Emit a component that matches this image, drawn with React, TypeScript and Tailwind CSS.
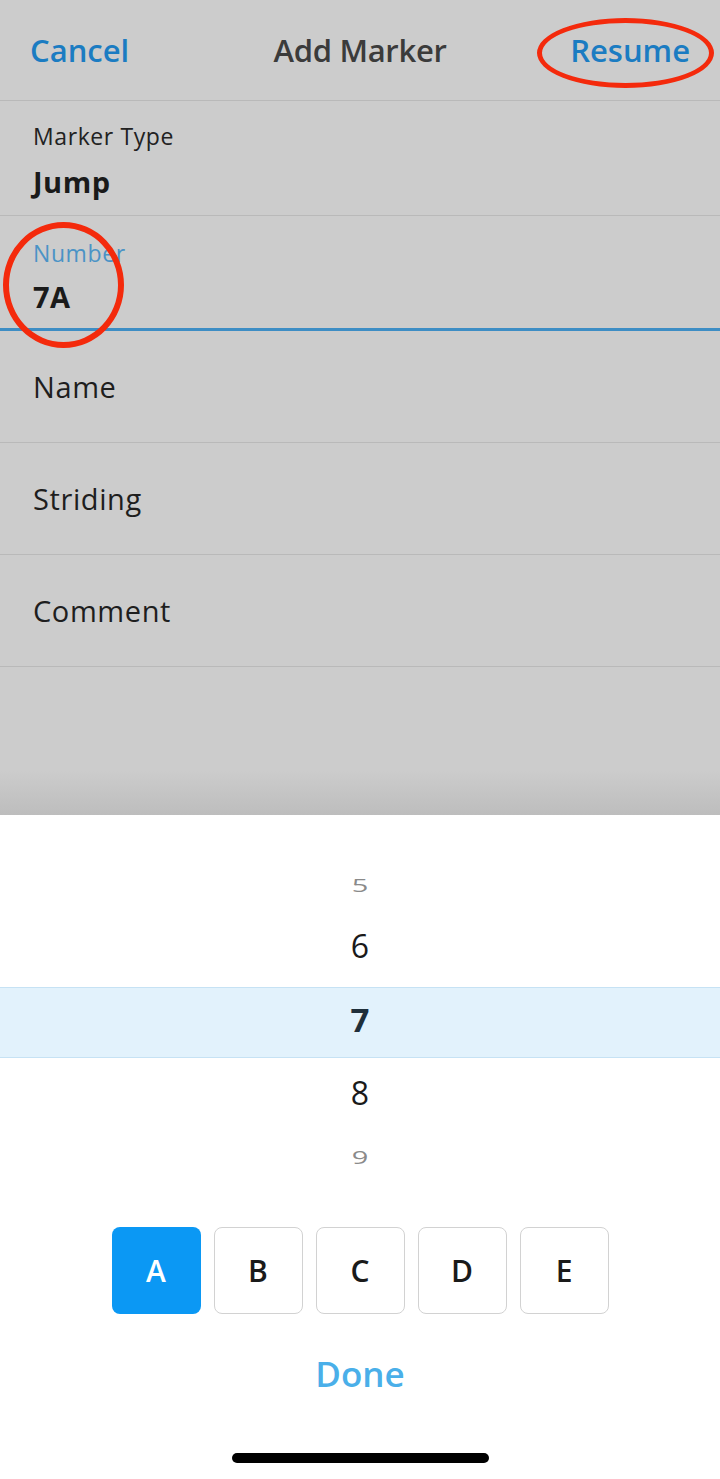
import React, { useState } from 'react';

const FONT = { fontFamily: '"Open Sans", Lato, sans-serif' };

const LETTERS = ['A', 'B', 'C', 'D', 'E'];

function Field({ label, value, active }: { label?: string; value: string; active?: boolean }) {
  if (!label) {
    return (
      <div className="h-[112px] flex items-center px-[33px] border-b border-[#b9b9b9]">
        <span className="text-[29px] tracking-[0.6px] text-[#1e1e1e]">{value}</span>
      </div>
    );
  }
  return (
    <div
      className={`h-[115px] flex flex-col px-[33px] ${
        active ? 'pt-[22px] border-b-[3px] border-[#3d8dc4]' : 'pt-[20px] border-b border-[#b9b9b9]'
      }`}
    >
      <span className={`text-[23px] tracking-[0.6px] leading-[30px] ${active ? 'text-[#4a93c6]' : 'text-[#222]'}`}>
        {label}
      </span>
      <span
        className={`text-[29px] font-bold tracking-[0.5px] leading-[40px] text-[#1a1a1a] ${
          active ? 'mt-[9px]' : 'mt-[11px]'
        }`}
      >
        {value}
      </span>
    </div>
  );
}

export default function App() {
  const [letter, setLetter] = useState('A');

  return (
    <div className="w-[720px] h-[1479px] flex flex-col bg-white overflow-hidden relative" style={FONT}>
      {/* dimmed form */}
      <div className="h-[815px] bg-[#cccccc] flex flex-col relative">
        <div className="h-[101px] flex items-center px-[30px] border-b border-[#b9b9b9] text-[31px] font-semibold">
          <span className="flex-1 text-[#1b7cc2]">Cancel</span>
          <span className="text-[#3b3b3b] tracking-[-0.3px]">Add Marker</span>
          <span className="flex-1 text-right text-[#1b7cc2]">Resume</span>
        </div>
        <Field label="Marker Type" value="Jump" />
        <Field label="Number" value={`7${letter}`} active />
        <Field value="Name" />
        <Field value="Striding" />
        <Field value="Comment" />
        <div className="flex-1 bg-gradient-to-b from-[#cccccc] from-70% to-[#bdbdbd]" />

        {/* red annotation marks */}
        <div className="absolute left-[537px] top-[18px] w-[177px] h-[70px] rounded-[50%] border-[5px] border-[#f42a0c]" />
        <div className="absolute left-[3px] top-[222px] w-[121px] h-[126px] rounded-[50%] border-[6px] border-[#f42a0c]" />
      </div>

      {/* picker sheet */}
      <div className="flex-1 flex flex-col">
        <div className="mt-[55px] flex flex-col items-center">
          <div className="h-[30px] flex items-center text-[29px] text-[#8a8a8a] scale-y-[0.65]">5</div>
          <div className="h-[87px] pt-[5px] flex items-center text-[32px] text-[#1a1a1a]">6</div>
          <div className="w-full h-[71px] flex items-center justify-center bg-[#e2f2fc] border-y border-[#c6e2f4] text-[33px] font-bold text-[#1f2f3a] pb-[5px]">
            7
          </div>
          <div className="h-[70px] flex items-center text-[32px] text-[#1a1a1a]">8</div>
          <div className="h-[58px] flex items-center text-[29px] text-[#8a8a8a] scale-y-[0.65]">9</div>
        </div>

        <div className="mt-[41px] flex justify-center gap-[13px]">
          {LETTERS.map(l => (
            <button
              key={l}
              onClick={() => setLetter(l)}
              className={`w-[89px] h-[87px] rounded-[8px] text-[30px] font-semibold flex items-center justify-center ${
                l === letter ? 'bg-[#0b98f4] text-white' : 'bg-white border border-[#d2d2d2] text-[#1a1a1a]'
              }`}
            >
              {l}
            </button>
          ))}
        </div>

        <div className="mt-[34px] flex justify-center">
          <span className="text-[35px] font-semibold text-[#4aafe9]">Done</span>
        </div>

        <div className="mt-auto mb-[16px] flex justify-center">
          <div className="w-[257px] h-[10px] rounded-full bg-black" />
        </div>
      </div>
    </div>
  );
}
